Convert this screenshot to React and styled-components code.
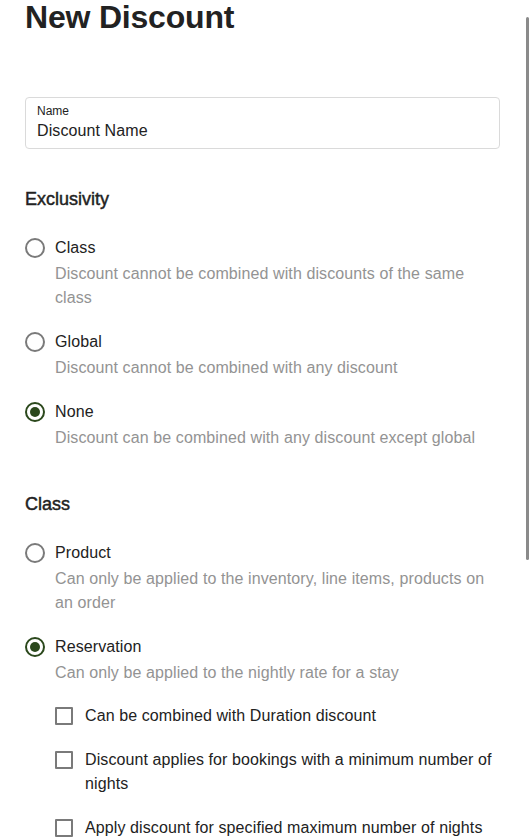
import React from "react";
import styled, { createGlobalStyle } from "styled-components";

const GlobalStyle = createGlobalStyle`
  html, body { margin: 0; padding: 0; background: #fff; overflow: hidden; }
  body { font-family: "Liberation Sans", Arial, sans-serif; color: #222; }
  * { box-sizing: border-box; }
`;

const Page = styled.div`
  padding: 0 32px 0 25px;
`;

const Title = styled.h1`
  margin: 0;
  font-size: 32px;
  line-height: 34px;
  font-weight: 700;
  color: #222;
  letter-spacing: -0.2px;
`;

const Field = styled.div`
  margin-top: 63px;
  height: 52px;
  border: 1px solid #dadada;
  border-radius: 4px;
  padding: 6px 11px 7px;
  display: flex;
  flex-direction: column;
  gap: 3px;
`;

const FieldLabel = styled.div`
  font-size: 12px;
  line-height: 14px;
  color: #222;
`;

const FieldValue = styled.div`
  font-size: 16px;
  line-height: 20px;
  letter-spacing: 0.1px;
  color: #222;
`;

const SectionTitle = styled.h2`
  margin: ${(p) => p.$top}px 0 0;
  font-size: 18px;
  line-height: 24px;
  font-weight: 400;
  -webkit-text-stroke: 0.45px #222;
  color: #222;
`;

const OptionList = styled.div`
  margin-top: 25px;
  display: flex;
  flex-direction: column;
  gap: 20px;
`;

const Option = styled.div`
  display: grid;
  grid-template-columns: 20px 1fr;
  column-gap: 10px;
  row-gap: 2px;
  align-items: center;
`;

const Radio = styled.span`
  width: 20px;
  height: 20px;
  border-radius: 50%;
  border: 2px solid ${(p) => (p.$checked ? "#2b481c" : "#7a7a7a")};
  display: flex;
  align-items: center;
  justify-content: center;
  &::after {
    content: "";
    width: 10px;
    height: 10px;
    border-radius: 50%;
    background: ${(p) => (p.$checked ? "#2b481c" : "transparent")};
  }
`;

const OptionLabel = styled.div`
  font-size: 16px;
  line-height: 24px;
  letter-spacing: 0.1px;
  color: #222;
`;

const Desc = styled.div`
  grid-column: 2;
  font-size: 16px;
  line-height: 24px;
  letter-spacing: 0.1px;
  color: #939393;
`;

const CheckList = styled.div`
  grid-column: 2;
  margin-top: 17px;
  display: flex;
  flex-direction: column;
  gap: 20px;
`;

const CheckRow = styled.div`
  display: grid;
  grid-template-columns: 18px 1fr;
  column-gap: 12px;
  align-items: start;
`;

const Box = styled.span`
  width: 18px;
  height: 18px;
  margin-top: 3px;
  border: 2px solid #7a7a7a;
  border-radius: 1px;
`;

const CheckLabel = styled.div`
  font-size: 16px;
  line-height: 24px;
  letter-spacing: 0.1px;
  color: #222;
`;

const ScrollThumb = styled.div`
  position: fixed;
  right: 3px;
  top: 17px;
  width: 3px;
  height: 543px;
  border-radius: 2px;
  background: #8a8a8a;
`;

const exclusivity = [
  { label: "Class", desc: "Discount cannot be combined with discounts of the same class" },
  { label: "Global", desc: "Discount cannot be combined with any discount" },
  { label: "None", desc: "Discount can be combined with any discount except global", checked: true },
];

const checks = [
  "Can be combined with Duration discount",
  "Discount applies for bookings with a minimum number of nights",
  "Apply discount for specified maximum number of nights",
];

export default function App() {
  return (
    <>
      <GlobalStyle />
      <Page>
        <Title>New Discount</Title>
        <Field>
          <FieldLabel>Name</FieldLabel>
          <FieldValue>Discount Name</FieldValue>
        </Field>

        <SectionTitle $top={38}>Exclusivity</SectionTitle>
        <OptionList>
          {exclusivity.map((o) => (
            <Option key={o.label}>
              <Radio $checked={o.checked} />
              <OptionLabel>{o.label}</OptionLabel>
              <Desc>{o.desc}</Desc>
            </Option>
          ))}
        </OptionList>

        <SectionTitle $top={42}>Class</SectionTitle>
        <OptionList>
          <Option>
            <Radio />
            <OptionLabel>Product</OptionLabel>
            <Desc>Can only be applied to the inventory, line items, products on an order</Desc>
          </Option>
          <Option>
            <Radio $checked />
            <OptionLabel>Reservation</OptionLabel>
            <Desc>Can only be applied to the nightly rate for a stay</Desc>
            <CheckList>
              {checks.map((c) => (
                <CheckRow key={c}>
                  <Box />
                  <CheckLabel>{c}</CheckLabel>
                </CheckRow>
              ))}
            </CheckList>
          </Option>
        </OptionList>
      </Page>
      <ScrollThumb />
    </>
  );
}
